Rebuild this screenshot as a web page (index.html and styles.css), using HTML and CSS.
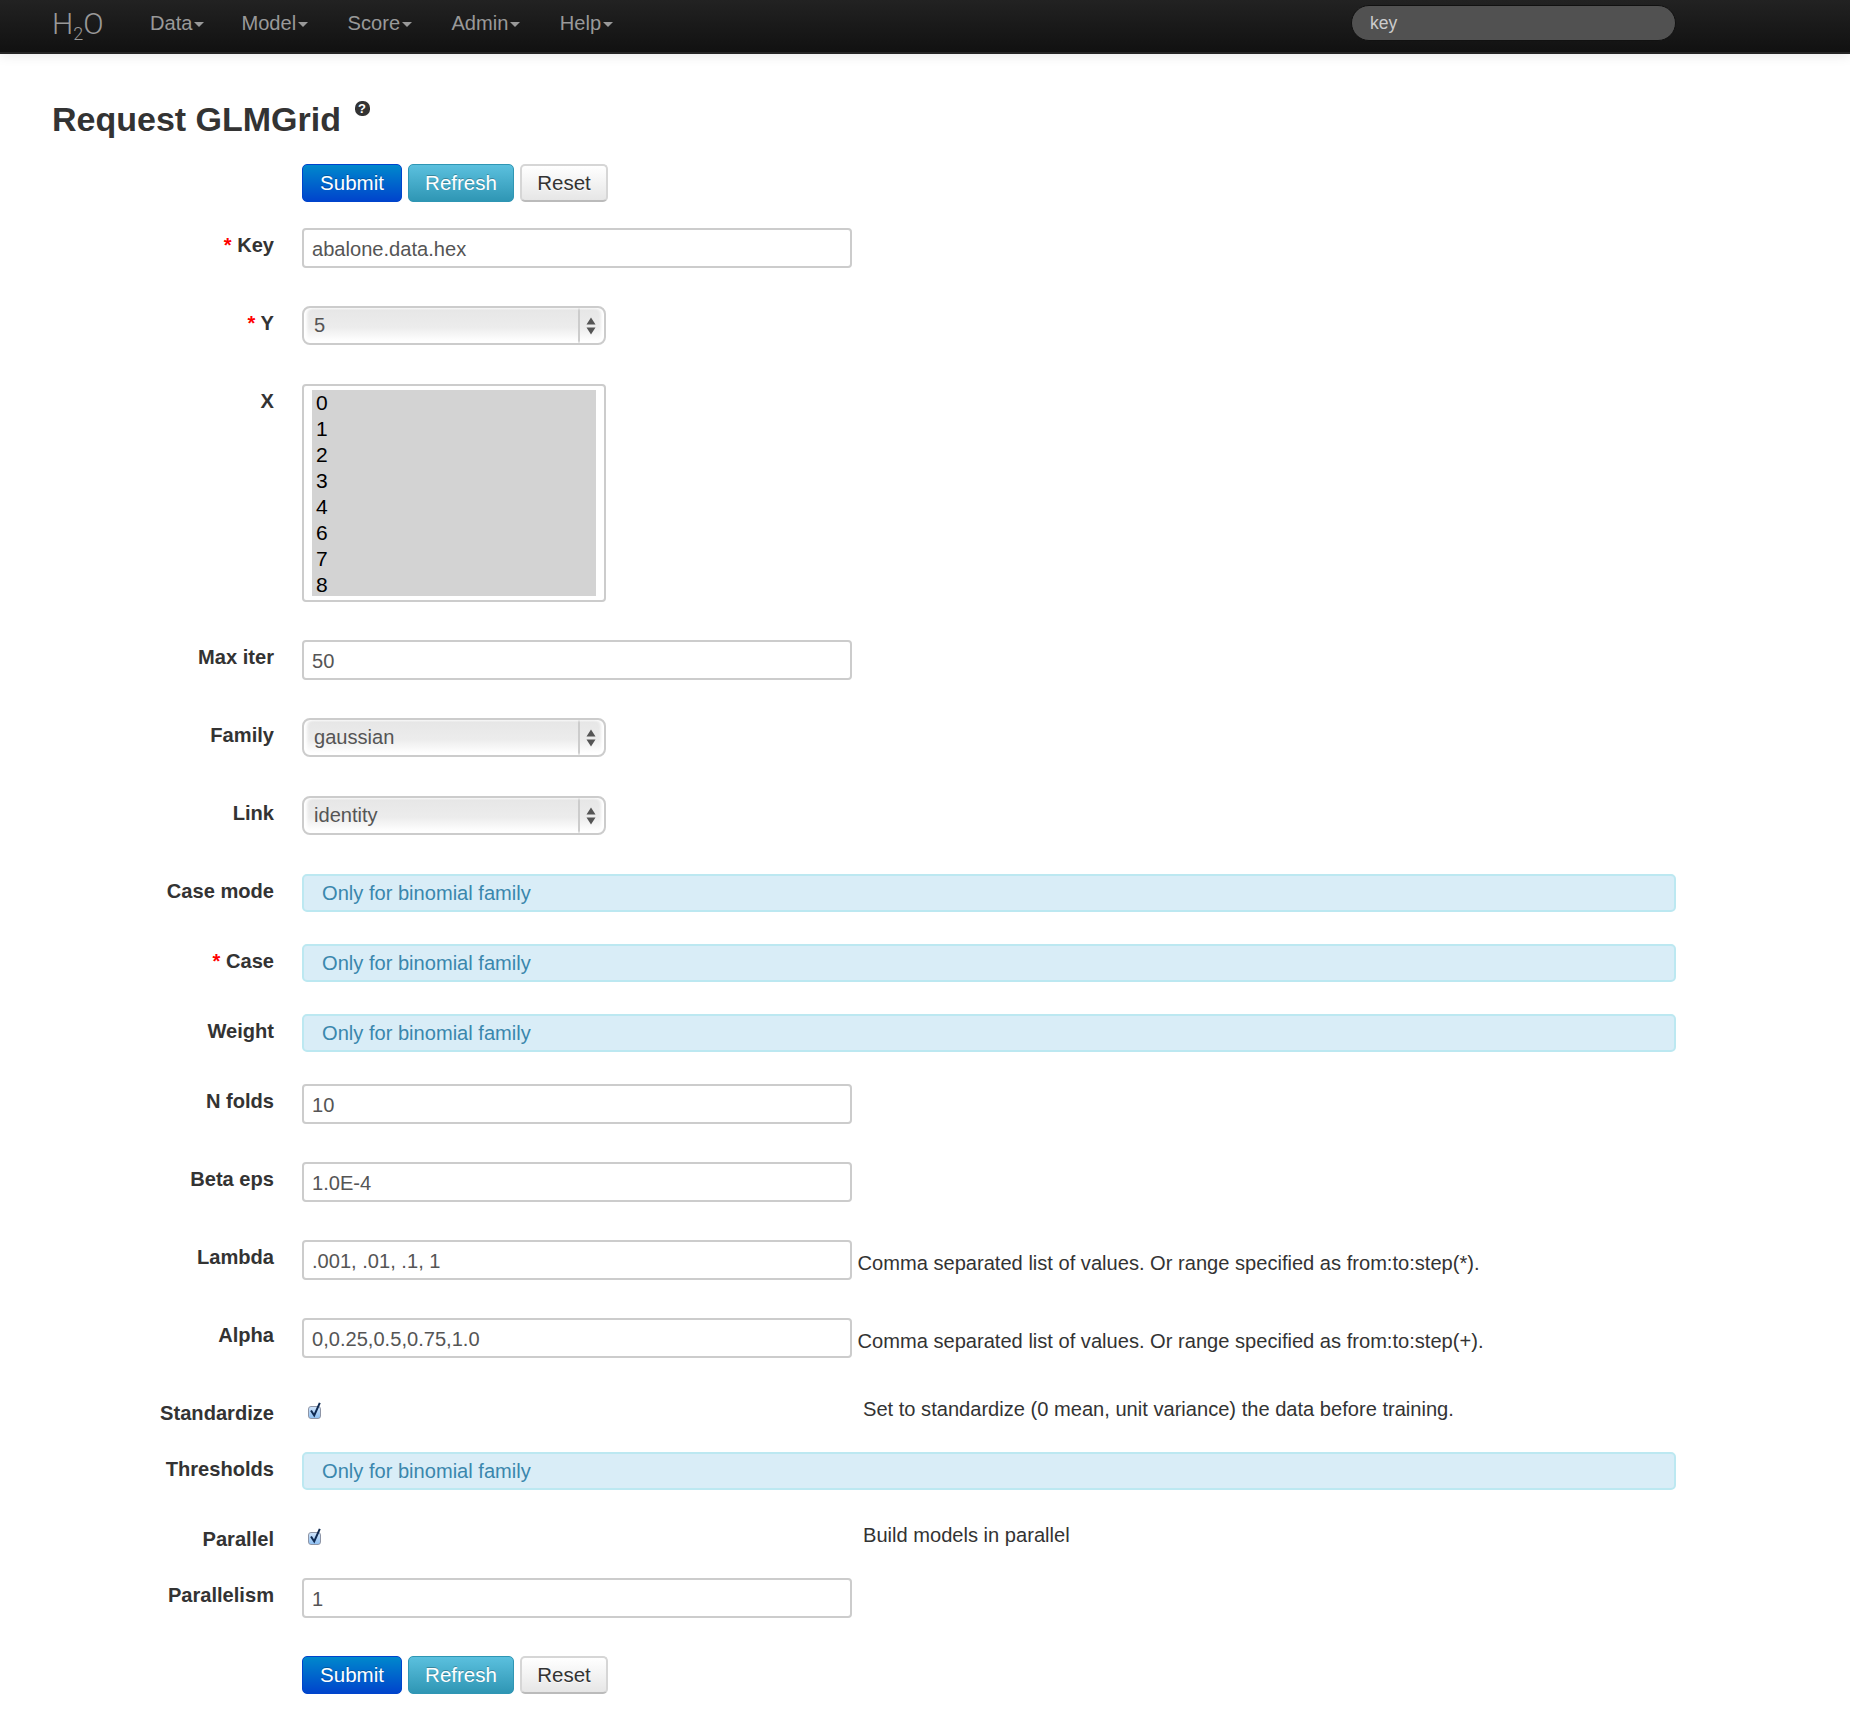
FILE: index.html
```html
<!DOCTYPE html>
<html lang="en">
<head>
<meta charset="utf-8">
<title>Request GLMGrid</title>
<link rel="stylesheet" href="styles.css">
</head>
<body>
<nav class="navbar">
  <a class="brand">H<sub class="brand-sub">2</sub>O</a>
  <ul class="nav-menu">
    <li class="nav-item">Data<span class="caret"></span></li>
    <li class="nav-item">Model<span class="caret"></span></li>
    <li class="nav-item">Score<span class="caret"></span></li>
    <li class="nav-item">Admin<span class="caret"></span></li>
    <li class="nav-item">Help<span class="caret"></span></li>
  </ul>
  <input class="search" type="text" placeholder="key">
</nav>
<main class="content">
  <div class="title-row">
    <h1 class="title">Request GLMGrid</h1>
    <span class="help-icon">?</span>
  </div>
  <form class="form">
    <div class="row m26">
      <div class="label"></div>
      <div class="actions">
        <button type="button" class="btn btn-primary">Submit</button>
        <button type="button" class="btn btn-info">Refresh</button>
        <button type="button" class="btn btn-default">Reset</button>
      </div>
    </div>
    <div class="row m38">
      <div class="label"><span class="req">*</span> Key</div>
      <input class="text" type="text" value="abalone.data.hex">
    </div>
    <div class="row m39">
      <div class="label"><span class="req">*</span> Y</div>
      <div class="select-wrap">
        <select class="select"><option>5</option></select>
        <svg class="select-arrows" viewBox="0 0 10 18" width="10" height="18"><path d="M5 0.5 9.5 7.5H0.5ZM5 17.5 0.5 10.5H9.5Z"/></svg>
      </div>
    </div>
    <div class="row m38">
      <div class="label">X</div>
      <select class="listbox" multiple size="8">
        <option selected>0</option>
        <option selected>1</option>
        <option selected>2</option>
        <option selected>3</option>
        <option selected>4</option>
        <option selected>6</option>
        <option selected>7</option>
        <option selected>8</option>
      </select>
    </div>
    <div class="row m38">
      <div class="label">Max iter</div>
      <input class="text" type="text" value="50">
    </div>
    <div class="row m39">
      <div class="label">Family</div>
      <div class="select-wrap">
        <select class="select"><option>gaussian</option></select>
        <svg class="select-arrows" viewBox="0 0 10 18" width="10" height="18"><path d="M5 0.5 9.5 7.5H0.5ZM5 17.5 0.5 10.5H9.5Z"/></svg>
      </div>
    </div>
    <div class="row m39">
      <div class="label">Link</div>
      <div class="select-wrap">
        <select class="select"><option>identity</option></select>
        <svg class="select-arrows" viewBox="0 0 10 18" width="10" height="18"><path d="M5 0.5 9.5 7.5H0.5ZM5 17.5 0.5 10.5H9.5Z"/></svg>
      </div>
    </div>
    <div class="row m32">
      <div class="label">Case mode</div>
      <div class="alert">Only for binomial family</div>
    </div>
    <div class="row m32">
      <div class="label"><span class="req">*</span> Case</div>
      <div class="alert">Only for binomial family</div>
    </div>
    <div class="row m32">
      <div class="label">Weight</div>
      <div class="alert">Only for binomial family</div>
    </div>
    <div class="row m38">
      <div class="label">N folds</div>
      <input class="text" type="text" value="10">
    </div>
    <div class="row m38">
      <div class="label">Beta eps</div>
      <input class="text" type="text" value="1.0E-4">
    </div>
    <div class="row m38">
      <div class="label">Lambda</div>
      <div class="with-help">
        <input class="text" type="text" value=".001, .01, .1, 1">
        <span class="help-inline">Comma separated list of values. Or range specified as from:to:step(*).</span>
      </div>
    </div>
    <div class="row m38">
      <div class="label">Alpha</div>
      <div class="with-help">
        <input class="text" type="text" value="0,0.25,0.5,0.75,1.0">
        <span class="help-inline">Comma separated list of values. Or range specified as from:to:step(+).</span>
      </div>
    </div>
    <div class="row m26">
      <div class="label">Standardize</div>
      <div class="check-row">
        <span class="check">
          <input class="check-box" type="checkbox" checked>
          <svg class="check-tick" viewBox="0 0 14 18" width="14" height="18"><path d="M3 9.5 6.2 14.5 11.8 1.8" /></svg>
        </span>
        <span class="help-check">Set to standardize (0 mean, unit variance) the data before training.</span>
      </div>
    </div>
    <div class="row m32">
      <div class="label">Thresholds</div>
      <div class="alert">Only for binomial family</div>
    </div>
    <div class="row m26">
      <div class="label">Parallel</div>
      <div class="check-row">
        <span class="check">
          <input class="check-box" type="checkbox" checked>
          <svg class="check-tick" viewBox="0 0 14 18" width="14" height="18"><path d="M3 9.5 6.2 14.5 11.8 1.8" /></svg>
        </span>
        <span class="help-check">Build models in parallel</span>
      </div>
    </div>
    <div class="row m38">
      <div class="label">Parallelism</div>
      <input class="text" type="text" value="1">
    </div>
    <div class="row">
      <div class="label"></div>
      <div class="actions">
        <button type="button" class="btn btn-primary">Submit</button>
        <button type="button" class="btn btn-info">Refresh</button>
        <button type="button" class="btn btn-default">Reset</button>
      </div>
    </div>
  </form>
</main>
</body>
</html>
```
FILE: styles.css
```css
* { box-sizing: border-box; }
html, body { margin: 0; padding: 0; background: #fff; }
body {
  font-family: "Liberation Sans", Arial, sans-serif;
  font-size: 20.1px;
  line-height: 26px;
  color: #333;
}
.navbar {
  display: flex;
  align-items: center;
  height: 54px;
  padding: 0 174px 6px 52px;
  background: linear-gradient(#222, #111);
  border-bottom: 2px solid #252525;
  box-shadow: 0 1px 12px rgba(0, 0, 0, .1);
}
.brand {
  width: 78.5px;
  margin-top: 2px;
  color: #999;
  font-family: Roboto, "Liberation Sans", sans-serif;
  font-weight: 300;
  font-size: 30px;
  line-height: 34px;
}
.brand-sub { font-size: 18px; line-height: 0; vertical-align: -6px; }
.nav-menu { display: flex; margin: 0; padding: 0; list-style: none; flex: 1; }
.nav-item { padding: 0 19.9px 0 19.5px; color: #999; }
.nav-item:first-child { padding-right: 17.5px; }
.caret {
  display: inline-block;
  width: 0;
  height: 0;
  margin-left: 2px;
  vertical-align: middle;
  border-top: 5px solid #999;
  border-left: 5px solid transparent;
  border-right: 5px solid transparent;
}
.search {
  width: 325px;
  height: 36px;
  padding: 0 18px;
  background: #515151;
  border: 1px solid #111;
  border-radius: 18px;
  color: #ccc;
  font: 17.5px "Liberation Sans", Arial, sans-serif;
  outline: none;
}
.search::placeholder { color: #ccc; opacity: 1; }
.content { padding: 39px 174px 24px 52px; }
.title-row { display: flex; align-items: flex-start; margin-bottom: 19px; }
.title {
  margin: 0;
  font-size: 34px;
  line-height: 52px;
  font-weight: 700;
  color: #333;
}
.help-icon {
  display: block;
  width: 15px;
  height: 15px;
  margin: 8px 0 0 13.5px;
  border-radius: 45%;
  background: #333;
  color: #fff;
  font-size: 13px;
  font-weight: 700;
  line-height: 15px;
  text-align: center;
}
.row { display: grid; grid-template-columns: 222px 1fr; column-gap: 28px; align-items: start; }
.m26 { margin-bottom: 26px; }
.m32 { margin-bottom: 32px; }
.m38 { margin-bottom: 38px; }
.m39 { margin-bottom: 39px; }
.label { padding-top: 4px; text-align: right; font-weight: 700; color: #333; }
.req { color: #f00; }
.actions { display: flex; gap: 6px; }
.btn {
  height: 38px;
  padding: 0;
  border-radius: 5px;
  font: 20.5px "Liberation Sans", Arial, sans-serif;
  text-shadow: 0 -1px 0 rgba(0, 0, 0, .25);
  color: #fff;
}
.btn-primary { width: 100px; border: 1px solid #04c; background: linear-gradient(#08c, #04c); }
.btn-info { width: 106px; border: 1px solid #2f96b4; background: linear-gradient(#5bc0de, #2f96b4); }
.btn-default {
  width: 88px;
  border: 2px solid #d6d6d6;
  border-bottom-color: #bbb;
  background: linear-gradient(#fff, #e6e6e6);
  color: #333;
  text-shadow: 0 1px 1px rgba(255, 255, 255, .75);
}
.text {
  display: block;
  width: 550px;
  height: 40px;
  padding: 2px 8px 0;
  border: 2px solid #ccc;
  border-radius: 4px;
  background: #fff;
  color: #555;
  font: 20.1px "Liberation Sans", Arial, sans-serif;
  outline: none;
}
.select-wrap { position: relative; width: 304px; height: 39px; }
.select {
  display: block;
  width: 100%;
  height: 100%;
  padding: 0 32px 2px 10px;
  appearance: none;
  border: 2px solid #ccc;
  border-radius: 8px;
  background:
    linear-gradient(#ccc, #ccc) right 24px top 0 / 2px 100% no-repeat,
    linear-gradient(#e6e6e6 0, #ececec 55%, #fff 95%);
  box-shadow: inset 3px 0 3px #fff, inset -3px 0 3px #fff;
  color: #555;
  font: 20.1px "Liberation Sans", Arial, sans-serif;
  outline: none;
}
.select-arrows { position: absolute; top: 11px; right: 10px; fill: #555; }
.listbox {
  display: block;
  width: 304px;
  height: 218px;
  padding: 4px 8px;
  border: 2px solid #ccc;
  border-radius: 4px;
  background: #fff;
  font: 21px "Liberation Sans", Arial, sans-serif;
  overflow: hidden;
  scrollbar-width: none;
  outline: none;
}
.listbox option {
  height: 26px;
  min-height: 26px;
  padding: 1px 4px 0;
  line-height: 26px;
  color: #000;
  background: linear-gradient(#d3d3d3, #d3d3d3);
}
.listbox option:last-child { height: 24px; min-height: 24px; }
.alert {
  height: 38px;
  padding: 0 18px;
  border: 2px solid #bce8f1;
  border-radius: 5px;
  background: #d9edf7;
  color: #3a87ad;
  line-height: 34px;
}
.with-help { display: flex; align-items: flex-start; gap: 5.5px; }
.help-inline { padding-top: 10px; color: #333; }
.check-row { display: flex; align-items: flex-start; }
.check { position: relative; display: block; width: 561px; height: 26px; }
.check-box {
  position: absolute;
  top: 10px;
  left: 6px;
  width: 13px;
  height: 13px;
  margin: 0;
  appearance: none;
  border: 1px solid #8e95a6;
  border-radius: 3px;
  background: linear-gradient(#cfe4fb, #8fc0f2);
}
.check-tick {
  position: absolute;
  top: 5px;
  left: 6px;
  fill: none;
  stroke: #0f2a52;
  stroke-width: 2;
}
.help-check { color: #333; white-space: nowrap; }
```
